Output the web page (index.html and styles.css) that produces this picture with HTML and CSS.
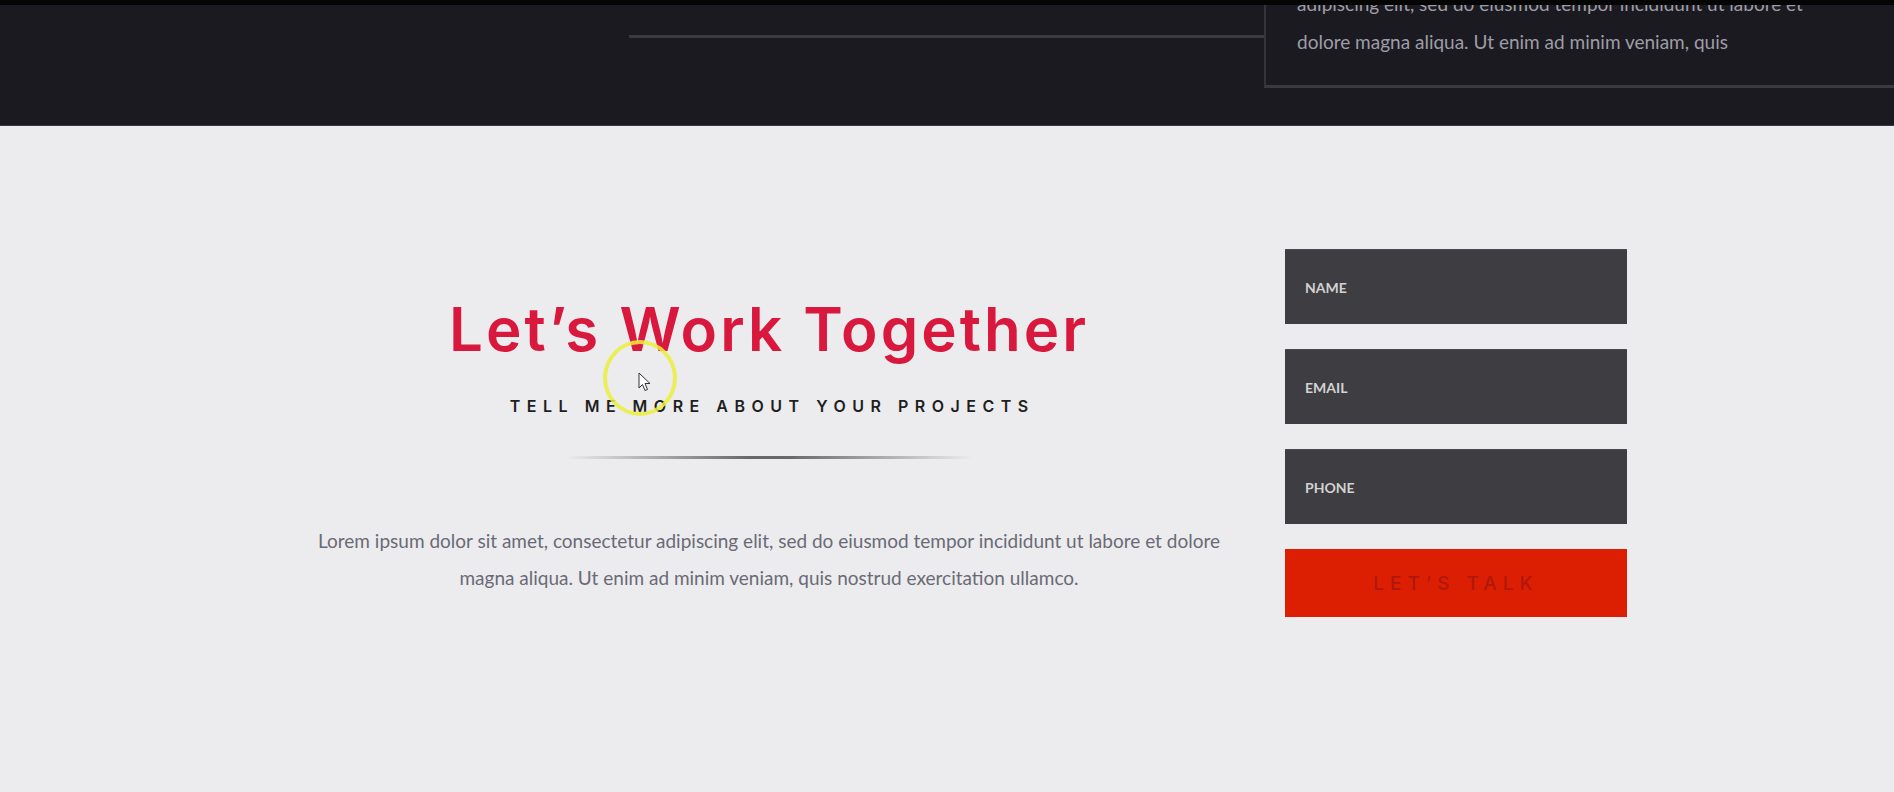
FILE: index.html
```html
<!DOCTYPE html>
<html lang="en">
<head>
<meta charset="utf-8">
<title>Let's Work Together</title>
<link rel="stylesheet" href="styles.css">
</head>
<body>
<div class="topbar"></div>
<section class="dark">
  <div class="card card-a"></div>
  <div class="card card-b">
    <p class="card-text">adipiscing elit, sed do eiusmod tempor incididunt ut labore et dolore magna aliqua. Ut enim ad minim veniam, quis</p>
  </div>
</section>
<section class="contact">
  <div class="intro">
    <h2 class="title">Let’s Work Together</h2>
    <p class="subtitle">TELL ME MORE ABOUT YOUR PROJECTS</p>
    <div class="divider"></div>
    <p class="lead">Lorem ipsum dolor sit amet, consectetur adipiscing elit, sed do eiusmod tempor incididunt ut labore et dolore magna aliqua. Ut enim ad minim veniam, quis nostrud exercitation ullamco.</p>
  </div>
  <form class="form">
    <input class="field" type="text" placeholder="NAME">
    <input class="field" type="email" placeholder="EMAIL">
    <input class="field" type="tel" placeholder="PHONE">
    <button class="submit" type="button">LET’S TALK</button>
  </form>
  <div class="cursor-ring"></div>
  <svg class="cursor" width="14" height="20" viewBox="0 0 14 20"><path d="M1 1 L1 16 L4.5 12.5 L7 18.5 L9.5 17.5 L7 11.5 L12 11.5 Z" fill="#fff" stroke="#333" stroke-width="1"/></svg>
</section>
</body>
</html>
```

FILE: styles.css
```css
* { box-sizing: border-box; }
html, body { margin: 0; padding: 0; }
body {
  width: 1894px;
  height: 792px;
  overflow: hidden;
  background: #ececee;
  font-family: Lato, "Open Sans", sans-serif;
}
.topbar { height: 5px; background: #050505; }

.dark {
  height: 121px;
  background: #1b1a21;
  display: flex;
  align-items: flex-start;
  padding-left: 629px;
  overflow: hidden;
  border-bottom: 1px solid #3a3941;
}
.card { flex: none; background: #1b1a21; }
.card-a {
  width: 635px;
  height: 33px;
  border-bottom: 3px solid #3a3942;
}
.card-b {
  width: 700px;
  height: 83px;
  border-left: 2px solid #34333b;
  border-bottom: 3px solid #3a3942;
  padding-left: 31px;
  overflow: hidden;
}
.card-text {
  margin: -20px 0 0;
  width: 540px;
  font-size: 19px;
  line-height: 38px;
  color: #9e9da6;
}

.contact {
  position: relative;
  height: 666px;
  display: flex;
  align-items: flex-start;
  padding: 123px 0 0 299px;
  gap: 46px;
}
.intro {
  width: 940px;
  padding-top: 45px;
  text-align: center;
}
.title {
  margin: 0;
  font-family: Inter, sans-serif;
  font-weight: 600;
  font-size: 60px;
  line-height: 70px;
  letter-spacing: 3px;
  color: #d9183d;
}
.subtitle {
  margin: 32px 0 0;
  font-family: Inter, sans-serif;
  font-weight: 600;
  font-size: 16px;
  line-height: 20px;
  letter-spacing: 6.5px;
  padding-left: 6.5px;
  color: #1f1f22;
}
.divider {
  width: 406px;
  height: 3px;
  margin: 40px auto 0;
  background: linear-gradient(to right, rgba(0,0,0,0), rgba(60,60,60,0.75) 45%, rgba(60,60,60,0.75) 55%, rgba(0,0,0,0));
  filter: blur(0.6px);
}
.lead {
  margin: 63px 0 0;
  font-size: 19px;
  line-height: 37px;
  color: #6a6a76;
}

.form {
  width: 342px;
  display: flex;
  flex-direction: column;
  gap: 25px;
}
.field {
  height: 75px;
  border: 0;
  border-top: 1px solid #4a494d;
  background: #3e3d41;
  padding: 0 20px;
  font-family: Lato, sans-serif;
  font-weight: 700;
  font-size: 14px;
  color: #d6d6d6;
  outline: none;
}
.field::placeholder { color: #d2d2d2; opacity: 1; }
.submit {
  height: 68px;
  border: 0;
  background: #dc1f02;
  font-family: Inter, sans-serif;
  font-weight: 500;
  font-size: 19px;
  letter-spacing: 6px;
  padding-left: 6px;
  color: #b0170c;
  cursor: pointer;
}

.cursor-ring {
  position: absolute;
  left: 603px;
  top: 214px;
  width: 74px;
  height: 76px;
  border-radius: 50%;
  border: 4px solid rgba(236, 238, 60, 0.85);
}
.cursor {
  position: absolute;
  left: 638px;
  top: 246px;
}
```
